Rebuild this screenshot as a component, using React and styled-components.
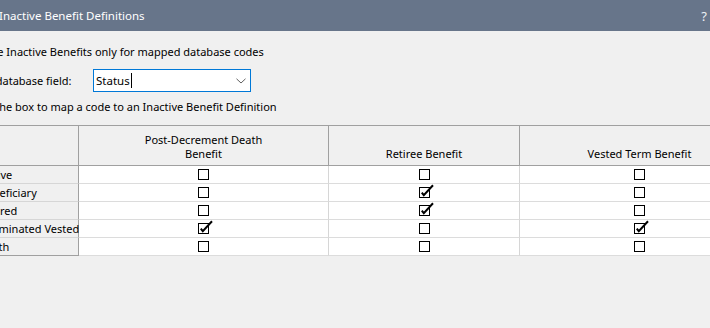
import React from "react";
import styled, { createGlobalStyle } from "styled-components";

const Global = createGlobalStyle`
  html, body { margin: 0; padding: 0; background: #f0f0f0; overflow: hidden; }
  body {
    font-family: "Segoe UI", "Noto Sans", "DejaVu Sans", sans-serif;
    font-size: 11px;
    color: #000;
  }
  #root { width: 710px; height: 328px; }
`;

const Dialog = styled.div`
  width: 710px;
  height: 328px;
  background: #f0f0f0;
  overflow: hidden;
  display: flex;
  flex-direction: column;
`;

const TitleBar = styled.div`
  flex: none;
  height: 31px;
  background: #67758a;
  color: #ffffff;
  display: flex;
  align-items: center;
  justify-content: space-between;
  white-space: nowrap;
`;

const Title = styled.span`
  font-size: 11.5px;
  line-height: 16px;
  margin-left: -1px;
  padding-top: 1px;
`;

const Help = styled.span`
  font-size: 13px;
  line-height: 16px;
  margin-right: 3px;
  color: #eef1f5;
`;

const Body = styled.div`
  display: flex;
  flex-direction: column;
  padding-top: 13px;
`;

const Line = styled.div`
  height: 16px;
  line-height: 16px;
  white-space: nowrap;
  margin-top: ${(p) => p.$mt || 0}px;
`;

/* the part of a word that lies left of the visible crop */
const Cut = styled.span`
  display: inline-block;
  width: ${(p) => p.$w}px;
  margin-left: ${(p) => p.$end - p.$w}px;
  text-align: right;
  white-space: nowrap;
`;

const FieldRow = styled.div`
  display: flex;
  align-items: center;
  margin-top: 9px;
  height: 23px;
`;

const FieldLabel = styled.div`
  flex: none;
  width: 93px;
  line-height: 16px;
  padding-top: 1px;
  white-space: nowrap;
`;

const Combo = styled.div`
  flex: none;
  box-sizing: border-box;
  width: 158px;
  height: 23px;
  border: 1px solid #0078d7;
  background: #ffffff;
  display: flex;
  align-items: center;
  padding: 0 4px 0 2px;
`;

const ComboText = styled.span`
  line-height: 16px;
  font-size: 11.5px;
  flex: 1;
  display: flex;
  align-items: center;
`;

const Caret = styled.span`
  display: inline-block;
  width: 1px;
  height: 15px;
  background: #000;
  margin-left: 1px;
`;

const Chevron = styled.svg`
  flex: none;
  width: 10px;
  height: 6px;
`;

const Table = styled.div`
  margin-top: 10px;
  display: grid;
  grid-template-columns: 79px 250px 191px 240px;
  border-top: 1px solid #a0a0a0;
`;

const HeadCell = styled.div`
  box-sizing: border-box;
  height: 40px;
  background: #f0f0f0;
  border-right: 1px solid #a0a0a0;
  border-bottom: 1px solid #a0a0a0;
  display: flex;
  flex-direction: column;
  justify-content: flex-end;
  align-items: center;
  text-align: center;
  line-height: 14px;
  padding-bottom: 4px;
  white-space: nowrap;
`;

const RowLabel = styled.div`
  box-sizing: border-box;
  height: 18px;
  background: #f0f0f0;
  border-right: 1px solid #a0a0a0;
  border-bottom: 1px solid ${(p) => (p.$last ? "#a0a0a0" : "#d6d6d6")};
  line-height: 16px;
  padding-top: 1px;
  white-space: nowrap;
  overflow: visible;
`;

const DataCell = styled.div`
  box-sizing: border-box;
  height: 18px;
  background: #ffffff;
  border-right: 1px solid #d6d6d6;
  border-bottom: 1px solid #dcdcdc;
  display: flex;
  align-items: center;
  justify-content: center;
`;

const Box = styled.span`
  position: relative;
  box-sizing: border-box;
  display: block;
  width: 11px;
  height: 11px;
  border: 1px solid #000;
  background: #fff;
  margin-left: ${(p) => p.$dx || 0}px;
`;

const Tick = styled.svg`
  position: absolute;
  left: -1px;
  top: -5px;
  width: 17px;
  height: 17px;
  overflow: visible;
`;

function CheckBox({ checked, dx }) {
  return (
    <Box $dx={dx}>
      {checked && (
        <Tick viewBox="0 0 17 17">
          <polyline
            points="2.8,9.6 4.8,12.2 14,2.2"
            fill="none"
            stroke="#000"
            strokeWidth="2"
            strokeLinejoin="miter"
          />
        </Tick>
      )}
    </Box>
  );
}

const columns = [
  { title: ["Post-Decrement Death", "Benefit"], dx: -1 },
  { title: ["Retiree Benefit"], dx: 0 },
  { title: ["Vested Term Benefit"], dx: -1 },
];

const rows = [
  { cut: "Acti", end: 0.5, rest: "ve", checks: [false, false, false] },
  { cut: "Ben", end: -0.5, rest: "eficiary", checks: [false, true, false] },
  { cut: "Reti", end: 0, rest: "red", checks: [false, true, false] },
  { cut: "Ter", end: -1.5, rest: "minated Vested", checks: [true, false, true] },
  { cut: "Dea", end: -1.5, rest: "th", checks: [false, false, false] },
];

export default function App() {
  return (
    <>
      <Global />
      <Dialog>
        <TitleBar>
          <Title>Inactive Benefit Definitions</Title>
          <Help>?</Help>
        </TitleBar>
        <Body>
          <Line>
            <Cut $w={40} $end={3.5}>Use</Cut> Inactive Benefits only for mapped database codes
          </Line>
          <FieldRow>
            <FieldLabel>
              <Cut $w={60} $end={2.5}>Select d</Cut>atabase field:
            </FieldLabel>
            <Combo>
              <ComboText>
                Status
                <Caret />
              </ComboText>
              <Chevron viewBox="0 0 10 6">
                <polyline points="0.5,0.8 5,5 9.5,0.8" fill="none" stroke="#606060" strokeWidth="1" />
              </Chevron>
            </Combo>
          </FieldRow>
          <Line $mt={7}>
            <Cut $w={60} $end={6}>Check th</Cut>e box to map a code to an Inactive Benefit Definition
          </Line>
          <Table>
            <HeadCell />
            {columns.map((c) => (
              <HeadCell key={c.title.join(" ")}>
                {c.title.map((t) => (
                  <span key={t}>{t}</span>
                ))}
              </HeadCell>
            ))}
            {rows.map((r, i) => (
              <React.Fragment key={r.rest}>
                <RowLabel $last={i === rows.length - 1}>
                  <Cut $w={40} $end={r.end}>{r.cut}</Cut>
                  {r.rest}
                </RowLabel>
                {r.checks.map((c, j) => (
                  <DataCell key={j}>
                    <CheckBox checked={c} dx={columns[j].dx} />
                  </DataCell>
                ))}
              </React.Fragment>
            ))}
          </Table>
        </Body>
      </Dialog>
    </>
  );
}
